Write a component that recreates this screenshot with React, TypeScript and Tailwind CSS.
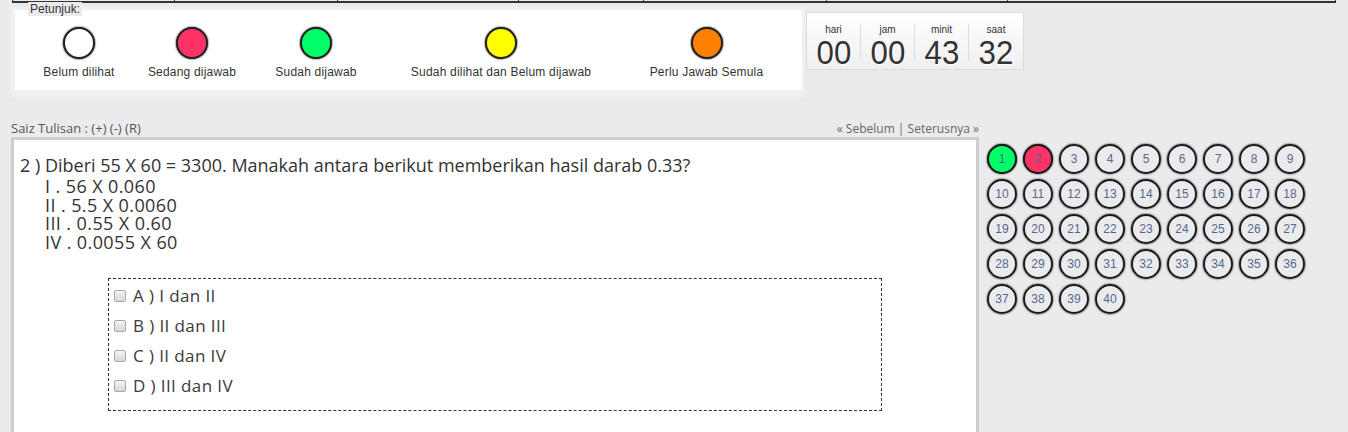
import React from 'react';

const legend = [
  { label: 'Belum dilihat', color: 'bg-white', width: 'w-[128px]' },
  { label: 'Sedang dijawab', color: 'bg-[#ff3366]', width: 'w-[98px]' },
  { label: 'Sudah dijawab', color: 'bg-[#00ff66]', width: 'w-[150px]' },
  { label: 'Sudah dilihat dan Belum dijawab', color: 'bg-[#ffff00]', width: 'w-[220px]' },
  { label: 'Perlu Jawab Semula', color: 'bg-[#ff8000]', width: 'w-[191px]' },
];

const timer = [
  { label: 'hari', value: '00' },
  { label: 'jam', value: '00' },
  { label: 'minit', value: '43' },
  { label: 'saat', value: '32' },
];

const options = ['A ) I dan II', 'B ) II dan III', 'C ) II dan IV', 'D ) III dan IV'];

const topCells = ['w-[162px]', 'w-[163px]', 'w-[181px]', 'w-[125px]', 'w-[183px]', 'w-[181px]', 'flex-1'];

function Bubble({ n }: { n: number }) {
  const bg = n === 1 ? 'bg-[#00ff66]' : n === 2 ? 'bg-[#ff3366]' : 'bg-transparent';
  return (
    <div
      className={`w-[30px] h-[30px] rounded-full border-2 border-[#1a1a1a] shadow-[0_0_2px_#000] flex items-center justify-center text-[12px] text-[#55688a] ${bg}`}
    >
      {n}
    </div>
  );
}

export default function App() {
  return (
    <div className="min-h-[432px] bg-[#ebebed] font-['Liberation_Sans',Arial,sans-serif] overflow-hidden">
      {/* bottom edge of the menu table above */}
      <div className="ml-[12px] w-[1324px] h-[3px] flex border-x border-b-2 border-[#333]">
        {topCells.map((w, i) => (
          <div key={i} className={`${w} ${i < topCells.length - 1 ? 'border-r border-[#333]' : ''}`} />
        ))}
      </div>

      {/* legend + countdown */}
      <div className="flex mt-[4px] ml-[11px]">
        <div className="relative w-[794px] bg-[#f0f0f1] pt-[3px] pl-[4px] pb-[7px]">
          <span className="absolute left-[17px] top-[-5px] bg-[#ebebed] px-[2px] text-[12px] leading-[14px] text-[#333]">
            Petunjuk:
          </span>
          <div className="w-[787px] h-[80px] bg-white flex">
            {legend.map((l) => (
              <div key={l.label} className={`${l.width} flex flex-col items-center pt-[17px]`}>
                <div className={`w-[32px] h-[32px] rounded-full border-2 border-[#222] shadow-[0_0_2px_#000] ${l.color}`} />
                <div className="mt-[6px] text-[12px] leading-[14px] tracking-[0.2px] text-[#333]">{l.label}</div>
              </div>
            ))}
          </div>
        </div>

        <div className="mt-[5px] ml-[1px] w-[218px] h-[58px] border border-[#dcdcdc] rounded-[2px] bg-linear-to-b from-white to-[#efefef] flex items-start pt-[11px]">
          {timer.map((t, i) => (
            <div
              key={t.label}
              className={`w-[54px] h-[37px] flex flex-col items-center ${i < 3 ? 'border-r border-[#dddddd]' : ''}`}
            >
              <div className="text-[10px] leading-[9px] text-[#333] mt-[1px]">{t.label}</div>
              <div className="mt-[6px] text-[34px] leading-[24px] text-[#333] scale-x-[0.92] [text-shadow:1px_1px_0_#fff]">
                {t.value}
              </div>
            </div>
          ))}
        </div>
      </div>

      {/* font size + navigation */}
      <div className="mt-[23px] ml-[11px] w-[968px] flex justify-between items-end font-['Open_Sans',sans-serif] leading-[17px]">
        <span className="text-[13px] text-[#555]">Saiz Tulisan : (+) (-) (R)</span>
        <span className="text-[12px] text-[#666]">« Sebelum | Seterusnya »</span>
      </div>

      <div className="flex ml-[11px]">
        {/* question */}
        <div className="w-[968px] min-h-[300px] bg-white border-[3px] border-[#cdcdcd] pl-[6px] pt-[14px] font-['Open_Sans',sans-serif] text-[#333]">
          <div className="text-[18px] leading-[22px]">
            2 ) Diberi 55 X 60 = 3300. Manakah antara berikut memberikan hasil darab 0.33?
          </div>
          <div className="pl-[25px] text-[18px] leading-[18.5px] tracking-[0.4px] mt-[1px]">
            <div>I . 56 X 0.060</div>
            <div>II . 5.5 X 0.0060</div>
            <div>III . 0.55 X 0.60</div>
            <div>IV . 0.0055 X 60</div>
          </div>

          <div className="w-[774px] ml-[88px] mt-[27px] border border-dashed border-[#333] pt-[2px] pb-[9px] pl-[5px]">
            {options.map((o) => (
              <div key={o} className="h-[30px] flex items-center">
                <span className="w-[12px] h-[12px] rounded-[2px] border border-[#a9a9a9] bg-linear-to-b from-[#f5f5f5] to-[#d6d6d6]" />
                <span className="ml-[7px] text-[17px] tracking-[0.4px] text-[#3a3a3a]">{o}</span>
              </div>
            ))}
          </div>
        </div>

        {/* question navigator */}
        <div className="ml-[8px] mt-[7px] grid grid-cols-[repeat(9,30px)] gap-x-[6px] gap-y-[5px] content-start">
          {Array.from({ length: 40 }, (_, i) => (
            <Bubble key={i} n={i + 1} />
          ))}
        </div>
      </div>
    </div>
  );
}
